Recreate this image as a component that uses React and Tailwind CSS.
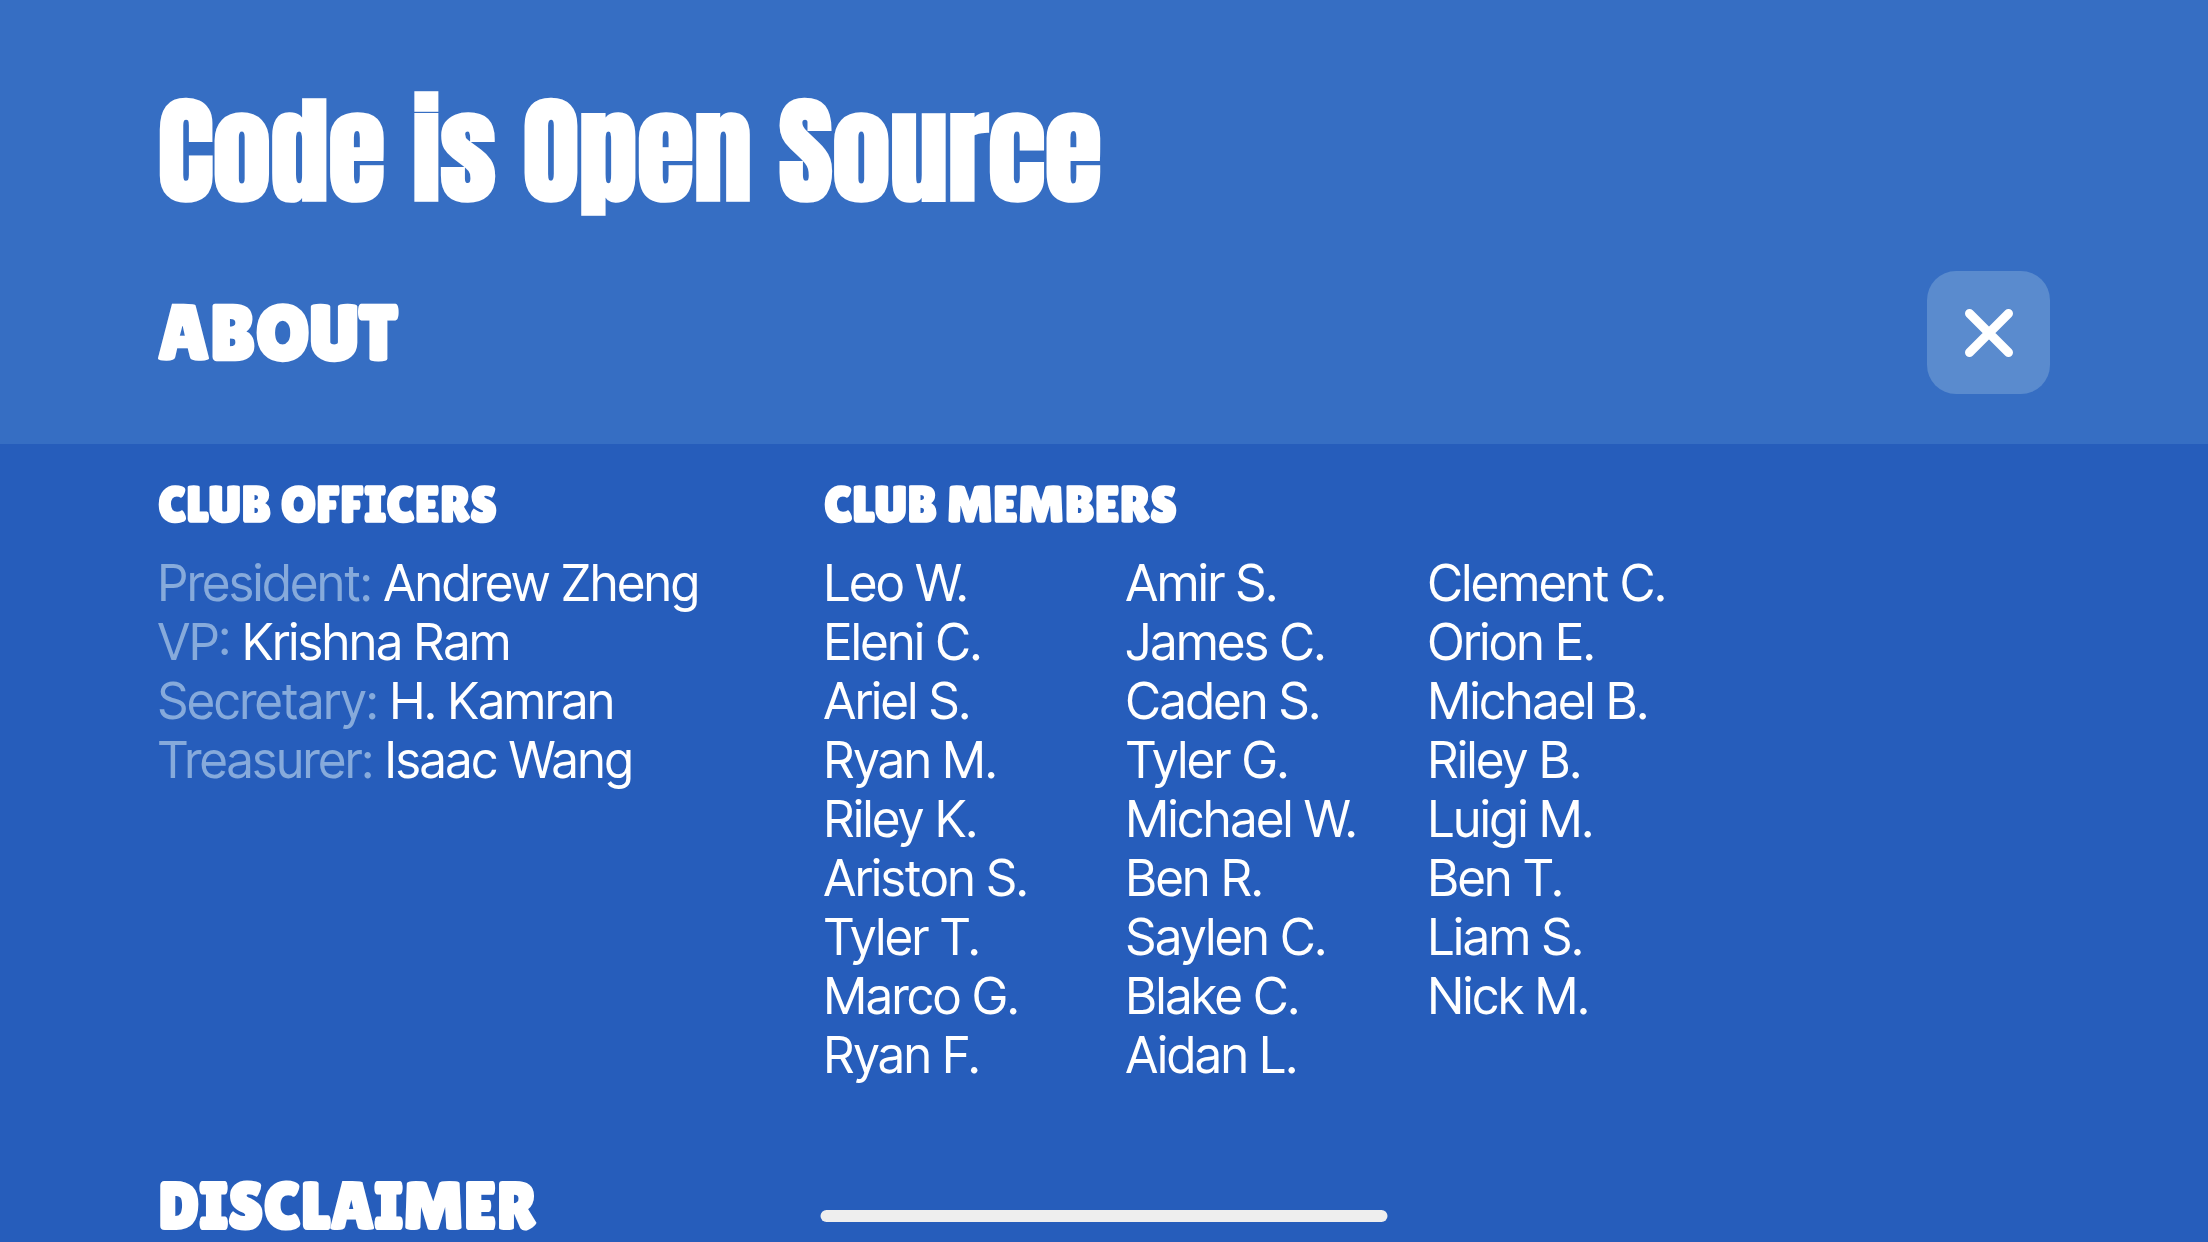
const officers = [
  ["President", "Andrew Zheng"],
  ["VP", "Krishna Ram"],
  ["Secretary", "H. Kamran"],
  ["Treasurer", "Isaac Wang"],
];

const members = [
  ["Leo W.", "Eleni C.", "Ariel S.", "Ryan M.", "Riley K.", "Ariston S.", "Tyler T.", "Marco G.", "Ryan F."],
  ["Amir S.", "James C.", "Caden S.", "Tyler G.", "Michael W.", "Ben R.", "Saylen C.", "Blake C.", "Aidan L."],
  ["Clement C.", "Orion E.", "Michael B.", "Riley B.", "Luigi M.", "Ben T.", "Liam S.", "Nick M."],
];

const display = "font-['Luckiest_Guy','Lilita_One','Open_Sans',sans-serif] font-extrabold uppercase";

export default function App() {
  return (
    <div className="relative h-screen overflow-hidden bg-[#265dbb] font-['Inter_Tight','Inter',sans-serif] text-white">
      <header className="bg-[#366ec3] px-[158px] pt-20 pb-[50px]">
        <h1 className="font-['Impact','Anton','Open_Sans',sans-serif] text-[116px] leading-[142px] font-extrabold whitespace-nowrap">
          Code is Open Source
        </h1>
        <div className="mt-[49px] flex items-center justify-between">
          <h2 className={`${display} text-[78px] leading-[100px]`}>About</h2>
          <button type="button" aria-label="Close" className="flex size-[123px] items-center justify-center rounded-[29px] bg-[#5a8bce]">
            <svg viewBox="0 0 48 48" className="size-12" fill="none" stroke="currentColor" strokeWidth="9" strokeLinecap="round">
              <path d="M4.5 4.5 43.5 43.5M43.5 4.5 4.5 43.5" />
            </svg>
          </button>
        </div>
      </header>
      <main className="px-[158px] pt-8">
        <div className="flex gap-[120px]">
          <section className="w-[546px] shrink-0">
            <h3 className={`${display} text-[51px] leading-[56px]`}>Club Officers</h3>
            <ul className="mt-[22px] text-[50px] leading-[59px] whitespace-nowrap">
              {officers.map(([role, name]) => (
                <li key={role}><span className="text-[#86aadb]">{role}:</span> {name}</li>
              ))}
            </ul>
          </section>
          <section>
            <h3 className={`${display} text-[51px] leading-[56px]`}>Club Members</h3>
            <div className="mt-[22px] grid grid-cols-[repeat(3,252px)] gap-x-[50px] text-[50px] leading-[59px] whitespace-nowrap">
              {members.map((column) => (
                <ul key={column[0]}>{column.map((name) => <li key={name}>{name}</li>)}</ul>
              ))}
            </div>
          </section>
        </div>
        <h2 className={`${display} mt-[87px] text-[67px] leading-[68px]`}>Disclaimer</h2>
      </main>
      <div className="absolute bottom-5 left-1/2 h-3 w-[567px] -translate-x-1/2 rounded-full bg-[#eeeeee]" />
    </div>
  );
}
